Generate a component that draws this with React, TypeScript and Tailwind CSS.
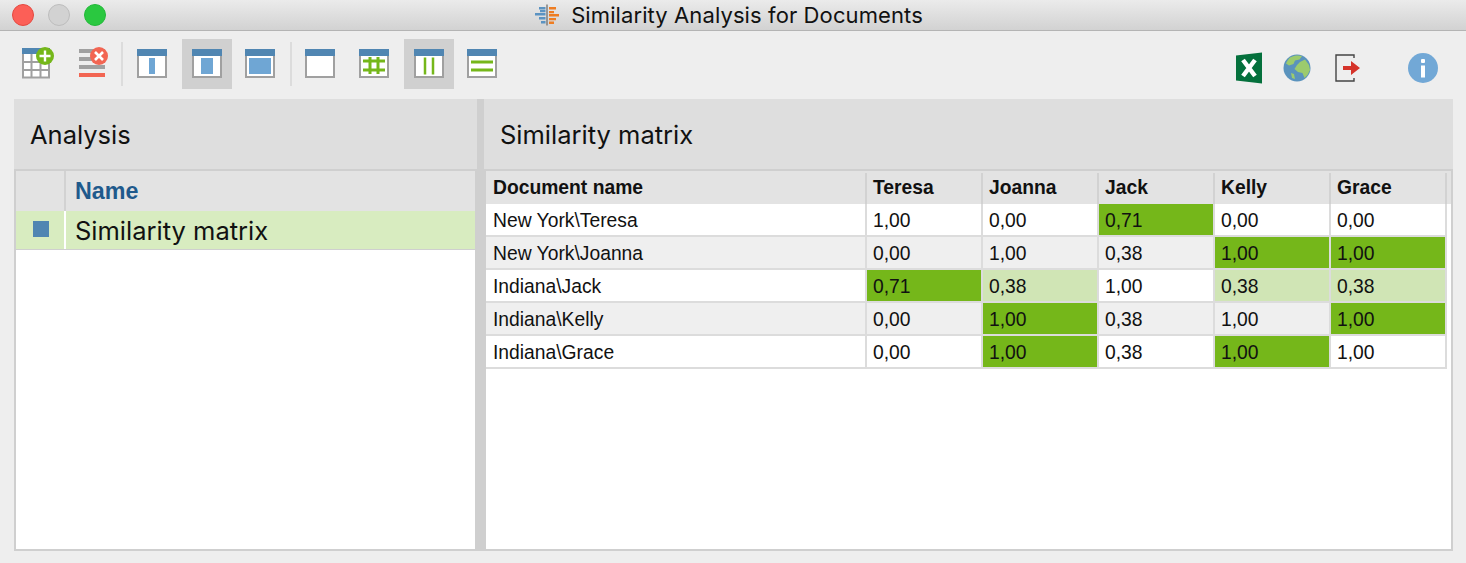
const names = ["Teresa", "Joanna", "Jack", "Kelly", "Grace"];

// 0 plain, 1 strong green, 2 light green
const rows = [
  { name: "New York\\Teresa", values: ["1,00", "0,00", "0,71", "0,00", "0,00"], tones: [0, 0, 1, 0, 0] },
  { name: "New York\\Joanna", values: ["0,00", "1,00", "0,38", "1,00", "1,00"], tones: [0, 0, 0, 1, 1] },
  { name: "Indiana\\Jack", values: ["0,71", "0,38", "1,00", "0,38", "0,38"], tones: [1, 2, 0, 2, 2] },
  { name: "Indiana\\Kelly", values: ["0,00", "1,00", "0,38", "1,00", "1,00"], tones: [0, 1, 0, 0, 1] },
  { name: "Indiana\\Grace", values: ["0,00", "1,00", "0,38", "1,00", "1,00"], tones: [0, 1, 0, 1, 0] },
];

function WindowIcon({ children }: { children?: React.ReactNode }) {
  return (
    <svg width="30" height="30" viewBox="0 0 30 30">
      <rect x="1" y="1" width="28" height="27" fill="#fff" stroke="#a0a0a0" strokeWidth="2" />
      <rect x="0" y="0" width="30" height="7" fill="#5086b2" />
      {children}
    </svg>
  );
}

function AddTableIcon() {
  return (
    <svg width="34" height="34" viewBox="0 0 34 34">
      <rect x="3" y="6" width="26" height="24.500" fill="#fff" stroke="#a0a0a0" strokeWidth="2" />
      <path d="M11.500 6v24M20.500 6v24M3 15h26M3 23h26" stroke="#a0a0a0" strokeWidth="2" />
      <rect x="2" y="1" width="28" height="6" fill="#5086b2" />
      <circle cx="25" cy="9" r="9" fill="#75b71a" />
      <path d="M25 3.500v11M19.500 9h11" stroke="#fff" strokeWidth="2.400" />
    </svg>
  );
}

function RemoveRowsIcon() {
  return (
    <svg width="34" height="34" viewBox="0 0 34 34">
      <rect x="3" y="2" width="26" height="4" fill="#a0a0a0" />
      <rect x="3" y="10" width="26" height="4" fill="#a0a0a0" />
      <rect x="3" y="18" width="26" height="4" fill="#a0a0a0" />
      <rect x="3" y="26" width="26" height="4" fill="#f26552" />
      <circle cx="23" cy="9" r="9" fill="#f26552" />
      <path d="M19 5l8 8M27 5l-8 8" stroke="#fff" strokeWidth="2.600" />
    </svg>
  );
}

function ExcelIcon() {
  return (
    <svg width="28" height="32" viewBox="0 0 28 32">
      <path d="M1 3.500L27 0.500V31.500L1 28.500Z" fill="#04703c" />
      <path d="M8 8l12 16M20 8L8 24" stroke="#fff" strokeWidth="4.500" />
    </svg>
  );
}

function GlobeIcon() {
  return (
    <svg width="28" height="28" viewBox="0 0 28 28">
      <circle cx="14" cy="14" r="13.500" fill="#5a93bd" />
      <path d="M7 3.500C11 1 16 1 19 2L16.500 5.500L12 6.500L10.500 10L6 11.500L3 9.500C4 7 5.500 5 7 3.500Z" fill="#9ccb6d" />
      <path d="M17 8L22 5.500L26 11L27 16L24.500 21L21.500 24L19.500 19L15 18L11.500 15L14 11Z" fill="#9ccb6d" />
      <path d="M8 19L11 20L12 25L9 24Z" fill="#9ccb6d" />
    </svg>
  );
}

function ExitIcon() {
  return (
    <svg width="26" height="28" viewBox="0 0 26 28">
      <path d="M19 4V1H1V27H19V24" fill="none" stroke="#444" strokeWidth="1.400" />
      <path d="M8 12H16V7L25 14L16 21V16H8Z" fill="#d5332a" />
    </svg>
  );
}

function InfoIcon() {
  return (
    <svg width="30" height="30" viewBox="0 0 30 30">
      <circle cx="15" cy="15" r="15" fill="#72a8d6" />
      <rect x="13" y="6" width="4" height="4" rx="1" fill="#fff" />
      <rect x="13" y="12.500" width="4" height="12" fill="#fff" />
    </svg>
  );
}

function TitleIcon() {
  return (
    <svg width="25" height="22" viewBox="0 0 25 22">
      <path d="M12 0.500V21.500" stroke="#666" strokeWidth="1.200" />
      <path d="M4 3h6.500v2.500H4zM0 9h10.500v2.500H0zM4 13h6.500v2.500H4zM6 17h4.500v2.500H6zM5 6h5.500v2.200H5z" fill="#5b93c2" />
      <path d="M14 3h7v2.500h-7zM14 7h5v2.200h-5zM14 10h10v2.500H14zM14 14h7v2.200h-7zM14 17.500h5V20h-5z" fill="#ee7d22" />
    </svg>
  );
}

function ToolButton({ active, className, children }: { active?: boolean; className?: string; children: React.ReactNode }) {
  return (
    <div className={`flex h-[50px] w-[50px] shrink-0 items-center justify-center ${active ? "bg-[#d0d0d0]" : ""} ${className ?? ""}`}>
      {children}
    </div>
  );
}

function Divider() {
  return <div className="h-[44px] w-[2px] shrink-0 bg-[#dcdcdc]" />;
}

const toneClass = ["", "bg-[#75b71a]", "bg-[#d0e5b5]"];

export default function App() {
  return (
    <div className="flex h-[563px] w-[1466px] flex-col overflow-hidden bg-[#eeeeee] font-['Liberation_Sans',sans-serif] text-black">
      {/* Title bar */}
      <div className="relative flex h-[31px] shrink-0 items-center justify-center border-b border-[#b4b4b4] bg-gradient-to-b from-[#ebebeb] to-[#d2d2d2]">
        <div className="absolute left-[12px] top-[4px] flex gap-[14px]">
          <div className="h-[22px] w-[22px] rounded-full border border-[#e5483f] bg-[#fc5f57]" />
          <div className="h-[22px] w-[22px] rounded-full border border-[#bdbdbd] bg-[#d2d2d2]" />
          <div className="h-[22px] w-[22px] rounded-full border border-[#23b93a] bg-[#2ac840]" />
        </div>
        <div className="flex items-center gap-[11px] pr-[8px]">
          <TitleIcon />
          <span className="font-['Inter',sans-serif] text-[22px] tracking-[0.1px] text-[#111]">Similarity Analysis for Documents</span>
        </div>
      </div>

      {/* Toolbar */}
      <div className="flex h-[68px] shrink-0 items-center pb-[2px] pl-[12px] pr-[28px]">
        <ToolButton><AddTableIcon /></ToolButton>
        <ToolButton className="ml-[6px]"><RemoveRowsIcon /></ToolButton>
        <div className="ml-[3px]"><Divider /></div>
        <ToolButton className="ml-[4px]">
          <WindowIcon><rect x="12" y="9" width="6" height="16" fill="#6fa6d4" /></WindowIcon>
        </ToolButton>
        <ToolButton active className="ml-[5px]">
          <WindowIcon><rect x="9" y="9" width="12" height="16" fill="#6fa6d4" /></WindowIcon>
        </ToolButton>
        <ToolButton className="ml-[3px]">
          <WindowIcon><rect x="4" y="9" width="22" height="16" fill="#6fa6d4" /></WindowIcon>
        </ToolButton>
        <div className="ml-[5px]"><Divider /></div>
        <ToolButton className="ml-[3px]"><WindowIcon /></ToolButton>
        <ToolButton className="ml-[4px]">
          <WindowIcon>
            <path d="M4 12h22M4 21h22M11 8v17M19 8v17" stroke="#75b71a" strokeWidth="3" />
          </WindowIcon>
        </ToolButton>
        <ToolButton active className="ml-[5px]">
          <WindowIcon>
            <path d="M11 8.500v17M19 8.500v17" stroke="#75b71a" strokeWidth="2.500" />
          </WindowIcon>
        </ToolButton>
        <ToolButton className="ml-[3px]">
          <WindowIcon>
            <path d="M4 13h22M4 21h22" stroke="#75b71a" strokeWidth="3" />
          </WindowIcon>
        </ToolButton>
        <div className="ml-auto mt-[8px] flex items-center">
          <div className="mr-[20px]"><ExcelIcon /></div>
          <div className="mr-[24px]"><GlobeIcon /></div>
          <div className="mr-[47px]"><ExitIcon /></div>
          <InfoIcon />
        </div>
      </div>

      {/* Panels */}
      <div className="flex h-[452px] shrink-0 pl-[14px] pr-[13px]">
        {/* Left panel */}
        <div className="flex w-[463px] shrink-0 flex-col">
          <div className="flex h-[70px] shrink-0 items-center bg-[#dedede] pl-[16px] pt-[2px] font-['Inter',sans-serif] text-[25.500px] text-[#111]">
            Analysis
          </div>
          <div className="flex min-h-0 flex-1 flex-col border-2 border-[#cfcfcf] bg-white">
            <div className="flex h-[40px] shrink-0 bg-[#e3e3e3]">
              <div className="w-[50px] shrink-0 border-r-2 border-[#d2d2d2]" />
              <div className="flex items-center pl-[9px] text-[23.300px] font-bold text-[#1f5a8c]">Name</div>
            </div>
            <div className="flex h-[39px] shrink-0 border-b border-[#cfcfcf] bg-[#d8ecc0]">
              <div className="flex w-[50px] shrink-0 items-center justify-center border-r-2 border-white pb-[3px] pl-[2px]">
                <div className="h-[16px] w-[16px] bg-[#5086b2]" />
              </div>
              <div className="flex items-center pl-[9px] pt-[2px] font-['Inter',sans-serif] text-[25.500px] text-[#111]">
                Similarity matrix
              </div>
            </div>
          </div>
        </div>

        {/* Splitter */}
        <div className="w-[7px] shrink-0 bg-[#cfcfcf]" />

        {/* Right panel */}
        <div className="flex min-w-0 flex-1 flex-col">
          <div className="flex h-[70px] shrink-0 items-center bg-[#dedede] pl-[16px] pt-[2px] font-['Inter',sans-serif] text-[25.500px] text-[#111]">
            Similarity matrix
          </div>
          <div className="min-h-0 flex-1 border-2 border-[#cfcfcf] bg-white">
            <div className="flex h-[33px] bg-[#e3e3e3] pt-[2px] text-[19.300px] font-bold text-[#111]">
              <div className="flex w-[381px] shrink-0 items-center border-r-2 border-[#d2d2d2] pl-[7px]">Document name</div>
              {names.map((name) => (
                <div key={name} className="flex w-[116px] shrink-0 items-center border-r-2 border-[#d2d2d2] pl-[6px]">{name}</div>
              ))}
            </div>
            {rows.map((row, i) => (
              <div key={row.name} className={`flex h-[33px] w-[961px] border-b-2 border-[#dcdcdc] text-[19.300px] text-[#111] ${i % 2 === 1 ? "bg-[#efefef]" : "bg-white"}`}>
                <div className="flex w-[381px] shrink-0 items-center border-r-2 border-[#dcdcdc] pl-[7px] pt-[4px]">{row.name}</div>
                {row.values.map((value, c) => (
                  <div key={c} className={`flex w-[116px] shrink-0 items-center border-r-2 border-[#dcdcdc] pl-[6px] pt-[4px] ${toneClass[row.tones[c]]}`}>
                    {value}
                  </div>
                ))}
              </div>
            ))}
          </div>
        </div>
      </div>
    </div>
  );
}
